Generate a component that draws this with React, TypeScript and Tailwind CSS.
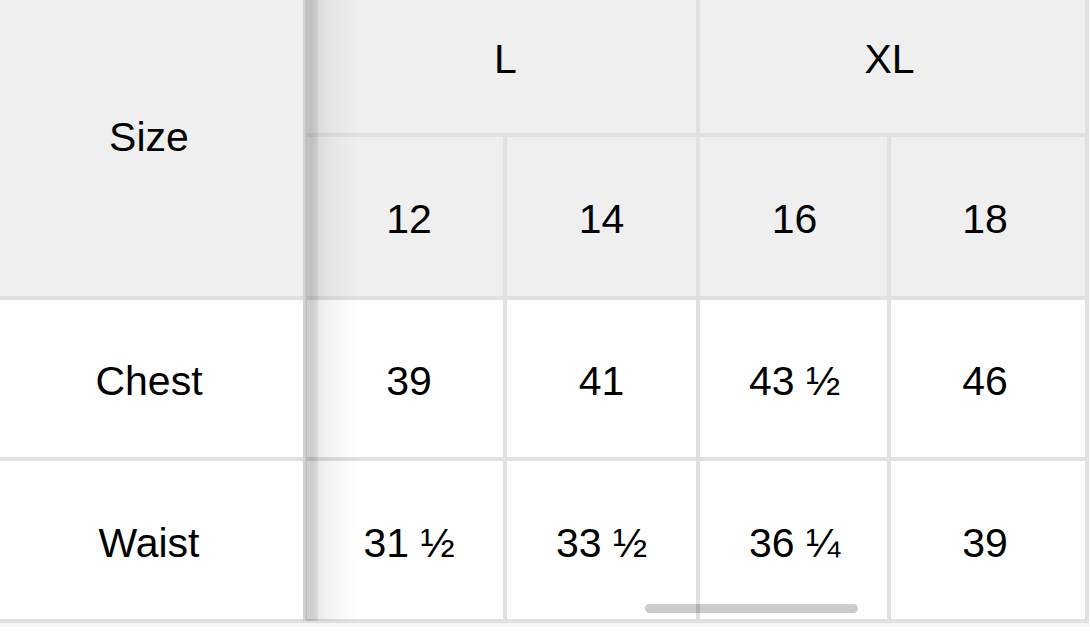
const body = [
  { label: "Chest", values: ["39", "41", "43 ½", "46"] },
  { label: "Waist", values: ["31 ½", "33 ½", "36 ¼", "39"] },
];

// small per-column nudges so the text sits where the reference has it
const colPad = ["pl-[8px]", "", "pl-[2px]", "pr-[6px]"];

export default function App() {
  return (
    <main className="relative min-h-screen overflow-hidden bg-white font-['Liberation_Sans',Arial,sans-serif] text-[41px] text-black">
      <div className="relative w-fit">
        <div className="grid grid-cols-[303px_196px_189px_187px_194px] grid-rows-[133px_159px_157px_158px] gap-[4px] bg-[#e0e0e0] pr-[4px] pb-[4px]">
          <div className="row-span-2 flex items-center justify-center bg-[#efefef] pr-[5px] pb-[20px]">Size</div>
          <div className="col-span-2 flex items-center justify-center bg-[#efefef] pb-[13px] pl-[8px]">L</div>
          <div className="col-span-2 flex items-center justify-center bg-[#efefef] pr-[6px] pb-[13px]">XL</div>
          {["12", "14", "16", "18"].map((s, i) => (
            <div key={s} className={`flex items-center justify-center bg-[#efefef] pt-[7px] ${colPad[i]}`}>
              {s}
            </div>
          ))}
          {body.map((row) => (
            <div key={row.label} className="contents">
              <div className="flex items-center justify-center bg-white pt-[7px] pr-[5px]">{row.label}</div>
              {row.values.map((v, i) => (
                <div key={i} className={`flex items-center justify-center bg-white pt-[7px] ${colPad[i]}`}>
                  {v}
                </div>
              ))}
            </div>
          ))}
        </div>

        {/* sticky first column shadow */}
        <div className="pointer-events-none absolute top-0 bottom-[2px] left-[303px] w-[56px] bg-[linear-gradient(to_right,rgba(0,0,0,0.06)_0px,rgba(0,0,0,0.06)_2px,rgba(0,0,0,0.17)_3px,rgba(0,0,0,0.2)_8px,rgba(0,0,0,0.15)_14px,rgba(0,0,0,0.08)_16px,rgba(0,0,0,0.04)_28px,rgba(0,0,0,0)_56px)]" />

        {/* overlay scrollbar */}
        <div className="absolute top-[604px] left-[645px] h-[9px] w-[213px] rounded-full bg-[rgba(0,0,0,0.2)]" />
      </div>
      <div className="h-[4px] w-full bg-[#f5f5f5]" />
    </main>
  );
}
